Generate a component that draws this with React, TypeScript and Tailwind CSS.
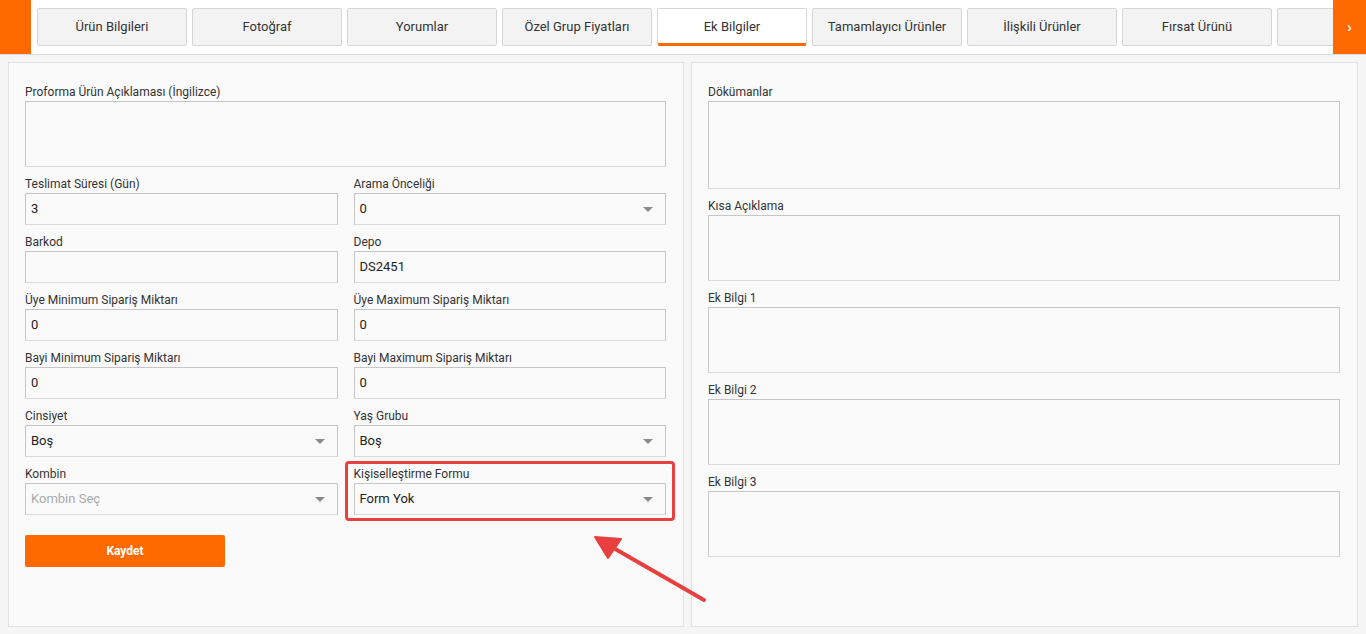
import { ReactNode } from 'react'

const tabs = [
  'Ürün Bilgileri',
  'Fotoğraf',
  'Yorumlar',
  'Özel Grup Fiyatları',
  'Ek Bilgiler',
  'Tamamlayıcı Ürünler',
  'İlişkili Ürünler',
  'Fırsat Ürünü',
  '',
]

function Caret() {
  return (
    <svg width="10" height="5" viewBox="0 0 10 5" className="shrink-0">
      <path d="M0 0h10L5 5z" fill="#8a8a8a" />
    </svg>
  )
}

function Field({ label, children }: { label: string; children: ReactNode }) {
  return (
    <div className="flex flex-col">
      <label className="h-[17px] text-[12px] leading-[17px] text-[#333]">{label}</label>
      {children}
    </div>
  )
}

const boxCls = 'border border-[#c6c6c6] border-b-[#dadada] bg-[#fafafa]'

function TextInput({ value }: { value?: string }) {
  return (
    <div className={`${boxCls} h-[32px] px-[5px] flex items-center text-[13px] text-[#222]`}>{value}</div>
  )
}

function Select({ value, placeholder }: { value?: string; placeholder?: boolean }) {
  return (
    <div className={`${boxCls} h-[32px] pl-[5px] pr-[12px] flex items-center justify-between text-[13px]`}>
      <span className={placeholder ? 'text-[#aaa]' : 'text-[#222]'}>{value}</span>
      <Caret />
    </div>
  )
}

function Area({ h }: { h: string }) {
  return <div className={`${boxCls} ${h}`} />
}

export default function App() {
  return (
    <div
      className="relative w-[1366px] h-[634px] overflow-hidden bg-[#f5f5f5]"
      style={{ fontFamily: 'Roboto, "Liberation Sans", sans-serif' }}
    >
      {/* tab bar */}
      <div className="flex h-[55px] bg-white border-b border-[#dcdcdc]">
        <div className="w-[31px] h-[54px] bg-[#ff6a00] shrink-0" />
        <div className="flex-1 flex gap-[5px] pl-[6px] pt-[8px] overflow-hidden">
          {tabs.map((t, i) => {
            const active = t === 'Ek Bilgiler'
            return (
              <div
                key={i}
                className={`w-[150px] h-[38px] shrink-0 flex items-center justify-center text-[13px] text-[#333] border rounded-[2px] ${
                  active
                    ? 'bg-white border-[#d8d8d8] border-b-[#ff6a00] shadow-[inset_0_-2px_0_#ff6a00]'
                    : 'bg-[#f3f3f3] border-[#d6d6d6]'
                }`}
              >
                {t}
              </div>
            )
          })}
        </div>
        <div className="w-[33px] h-[54px] bg-[#ff6a00] shrink-0 flex items-center justify-center text-white text-[15px] font-bold">
          ›
        </div>
      </div>

      {/* content */}
      <div className="flex gap-[7px] px-[8px] pt-[7px]">
        <div className="w-[676px] h-[565px] bg-[#fafafa] border border-[#e2e2e2] pt-[21px] pl-[16px] pr-[17px]">
          <Field label="Proforma Ürün Açıklaması (İngilizce)">
            <Area h="h-[66px]" />
          </Field>
          <div className="grid grid-cols-2 gap-x-[16px] gap-y-[9px] mt-[9px]">
            <Field label="Teslimat Süresi (Gün)">
              <TextInput value="3" />
            </Field>
            <Field label="Arama Önceliği">
              <Select value="0" />
            </Field>
            <Field label="Barkod">
              <TextInput />
            </Field>
            <Field label="Depo">
              <TextInput value="DS2451" />
            </Field>
            <Field label="Üye Minimum Sipariş Miktarı">
              <TextInput value="0" />
            </Field>
            <Field label="Üye Maximum Sipariş Miktarı">
              <TextInput value="0" />
            </Field>
            <Field label="Bayi Minimum Sipariş Miktarı">
              <TextInput value="0" />
            </Field>
            <Field label="Bayi Maximum Sipariş Miktarı">
              <TextInput value="0" />
            </Field>
            <Field label="Cinsiyet">
              <Select value="Boş" />
            </Field>
            <Field label="Yaş Grubu">
              <Select value="Boş" />
            </Field>
            <Field label="Kombin">
              <Select value="Kombin Seç" placeholder />
            </Field>
            <div className="relative">
              <Field label="Kişiselleştirme Formu">
                <Select value="Form Yok" />
              </Field>
              <div className="absolute -left-[9px] -right-[9px] -top-[5px] -bottom-[6px] border-[3px] border-[#e8403f] rounded-[4px] pointer-events-none" />
            </div>
          </div>
          <button className="mt-[20px] w-[200px] h-[32px] bg-[#ff6a00] text-white text-[12px] font-bold rounded-[2px]">
            Kaydet
          </button>
        </div>

        <div className="flex-1 h-[565px] bg-[#fafafa] border border-[#e2e2e2] pt-[21px] pl-[16px] pr-[17px] flex flex-col gap-[9px]">
          <Field label="Dökümanlar">
            <Area h="h-[88px]" />
          </Field>
          <Field label="Kısa Açıklama">
            <Area h="h-[66px]" />
          </Field>
          <Field label="Ek Bilgi 1">
            <Area h="h-[66px]" />
          </Field>
          <Field label="Ek Bilgi 2">
            <Area h="h-[66px]" />
          </Field>
          <Field label="Ek Bilgi 3">
            <Area h="h-[66px]" />
          </Field>
        </div>
      </div>

      {/* annotation arrow */}
      <svg className="absolute left-0 top-0 pointer-events-none" width="1366" height="634">
        <line x1="704" y1="600" x2="610" y2="546" stroke="#e8403f" strokeWidth="4" strokeLinecap="round" />
        <path d="M595 537 L621 539 L608 558 Z" fill="#e8403f" stroke="#e8403f" strokeWidth="2" strokeLinejoin="round" />
      </svg>
    </div>
  )
}
